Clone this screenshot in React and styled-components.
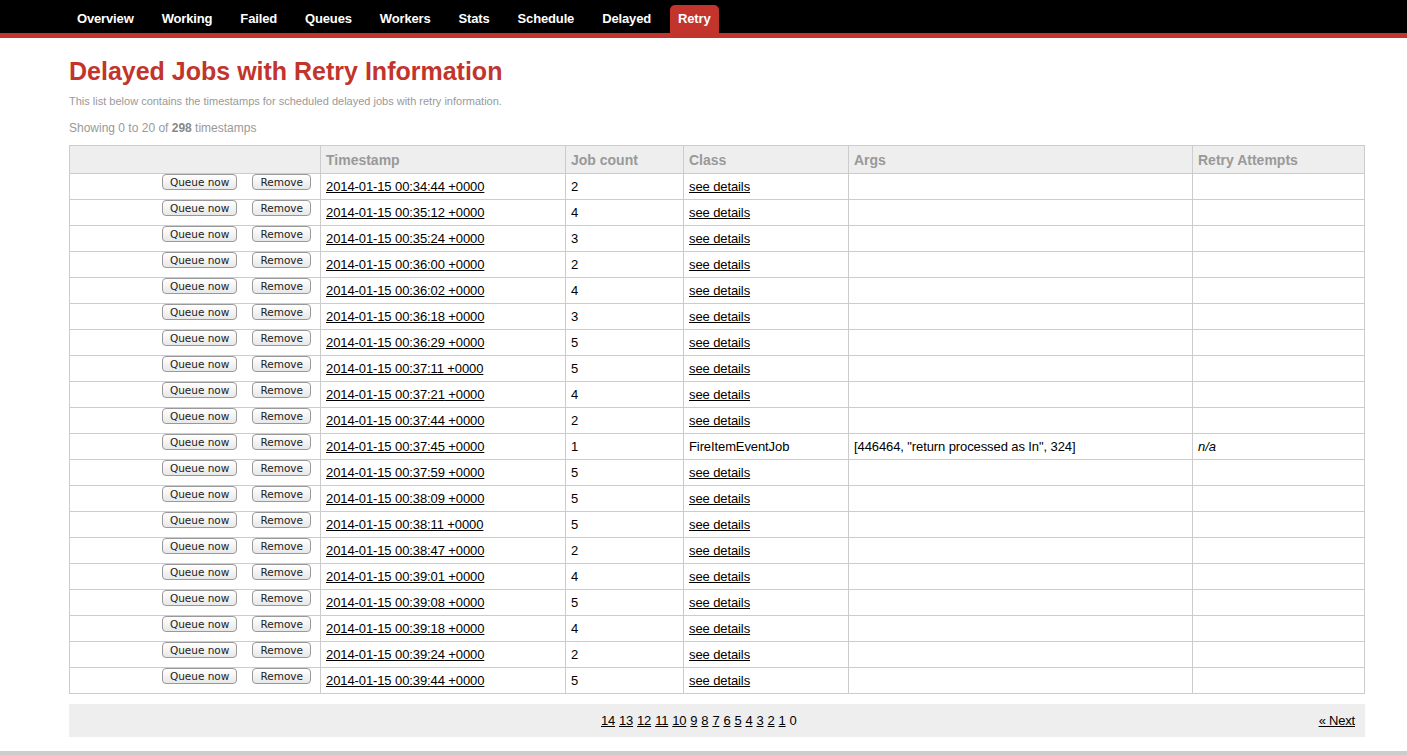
import styled, { createGlobalStyle } from 'styled-components';

const GlobalStyle = createGlobalStyle`
    body {
        margin: 0;
        background: #fff;
        font-family: "Liberation Sans", Arial, Helvetica, sans-serif;
        color: #000;
    }
`;

const tabs = ['Overview', 'Working', 'Failed', 'Queues', 'Workers', 'Stats', 'Schedule', 'Delayed', 'Retry'];

const rows = [
    ['00:34:44', 2], ['00:35:12', 4], ['00:35:24', 3], ['00:36:00', 2], ['00:36:02', 4],
    ['00:36:18', 3], ['00:36:29', 5], ['00:37:11', 5], ['00:37:21', 4], ['00:37:44', 2],
    ['00:37:45', 1, true], ['00:37:59', 5], ['00:38:09', 5], ['00:38:11', 5], ['00:38:47', 2],
    ['00:39:01', 4], ['00:39:08', 5], ['00:39:18', 4], ['00:39:24', 2], ['00:39:44', 5],
];

const pages = [14, 13, 12, 11, 10, 9, 8, 7, 6, 5, 4, 3, 2, 1];

const App = () => {
    return (
        <>
            <GlobalStyle />
            <Header>
                <Nav>
                    {tabs.map(t => (
                        <Tab key={t} $active={t === 'Retry'}>{t}</Tab>
                    ))}
                </Nav>
            </Header>
            <Main>
                <Title>Delayed Jobs with Retry Information</Title>
                <Intro>This list below contains the timestamps for scheduled delayed jobs with retry information.</Intro>
                <Summary>Showing 0 to 20 of <b>298</b> timestamps</Summary>
                <Table>
                    <colgroup>
                        <col style={{ width: 251 }} />
                        <col style={{ width: 245 }} />
                        <col style={{ width: 118 }} />
                        <col style={{ width: 165 }} />
                        <col style={{ width: 344 }} />
                        <col />
                    </colgroup>
                    <thead>
                        <tr>
                            <Th></Th>
                            <Th>Timestamp</Th>
                            <Th>Job count</Th>
                            <Th>Class</Th>
                            <Th>Args</Th>
                            <Th>Retry Attempts</Th>
                        </tr>
                    </thead>
                    <tbody>
                        {rows.map(([time, count, single]) => (
                            <tr key={time}>
                                <ActionCell>
                                    <Button>Queue now</Button>
                                    <Button>Remove</Button>
                                </ActionCell>
                                <Td><Link href="#">2014-01-15 {time} +0000</Link></Td>
                                <Td>{count}</Td>
                                <Td>{single ? 'FireItemEventJob' : <Link href="#">see details</Link>}</Td>
                                <Td>{single ? '[446464, "return processed as In", 324]' : ''}</Td>
                                <Td>{single ? <i>n/a</i> : ''}</Td>
                            </tr>
                        ))}
                    </tbody>
                </Table>
                <Pager>
                    <PageList>
                        {pages.map(p => <PageLink key={p} href="#">{p}</PageLink>)}
                        <span>0</span>
                    </PageList>
                    <PageLink href="#">« Next</PageLink>
                </Pager>
            </Main>
            <Footer />
        </>
    );
};

const Header = styled.div`
    background: #000;
    border-bottom: 5px solid #c2342c;
    height: 33px;
`;

const Nav = styled.ul`
    display: flex;
    align-items: flex-end;
    height: 33px;
    margin: 0;
    padding: 0 0 0 68px;
    list-style: none;
    gap: 10px;
`;

const Tab = styled.li`
    height: 28px;
    line-height: 27px;
    padding: 0 ${p => (p.$active ? '8px' : '9px')};
    font-size: 13px;
    font-weight: bold;
    letter-spacing: -0.15px;
    color: #fff;
    border-radius: 5px 5px 0 0;
    background: ${p => (p.$active ? '#c2342c' : 'transparent')};
`;

const Main = styled.div`
    padding: 18px 42px 0 69px;
`;

const Title = styled.h1`
    margin: 0;
    font-size: 25px;
    line-height: 30px;
    color: #c2342c;
`;

const Intro = styled.p`
    margin: 8px 0 0;
    font-size: 11px;
    line-height: 14px;
    color: #999;
`;

const Summary = styled.p`
    margin: 13px 0 0;
    font-size: 12px;
    line-height: 15px;
    color: #999;
    b {
        color: #888;
    }
`;

const Table = styled.table`
    margin-top: 9px;
    width: 100%;
    border-collapse: collapse;
    table-layout: fixed;
    font-size: 13px;
`;

const Th = styled.th`
    height: 27px;
    padding: 0 5px;
    text-align: left;
    font-size: 14px;
    font-weight: bold;
    color: #999;
    background: #eee;
    border: 1px solid #ccc;
`;

const Td = styled.td`
    height: 20px;
    padding: 5px 5px 0;
    line-height: 16px;
    vertical-align: top;
    border: 1px solid #ccc;
    white-space: nowrap;
    letter-spacing: -0.1px;
`;

const ActionCell = styled(Td)`
    padding: 0 9px 0 0;
    text-align: right;
    letter-spacing: 0;
`;

const Button = styled.button`
    height: 16px;
    margin-left: 15px;
    padding: 0 7px;
    font-family: "DejaVu Sans", sans-serif;
    font-size: 10.5px;
    line-height: 14px;
    color: #222;
    border: 1px solid #999;
    border-radius: 4px;
    background: linear-gradient(#fff, #e8e8e8);
    vertical-align: top;
`;

const Link = styled.a`
    color: #000;
    text-decoration: underline;
`;

const Pager = styled.div`
    display: flex;
    align-items: center;
    margin-top: 10px;
    height: 33px;
    padding: 0 10px;
    background: #eee;
    font-size: 13px;
    letter-spacing: -0.2px;
`;

const PageList = styled.div`
    flex: 1;
    display: flex;
    justify-content: center;
    gap: 4px;
`;

const PageLink = styled.a`
    color: #000;
    text-decoration: underline;
`;

const Footer = styled.div`
    margin-top: 14px;
    border-top: 5px solid #ccc;
`;

export default App;
